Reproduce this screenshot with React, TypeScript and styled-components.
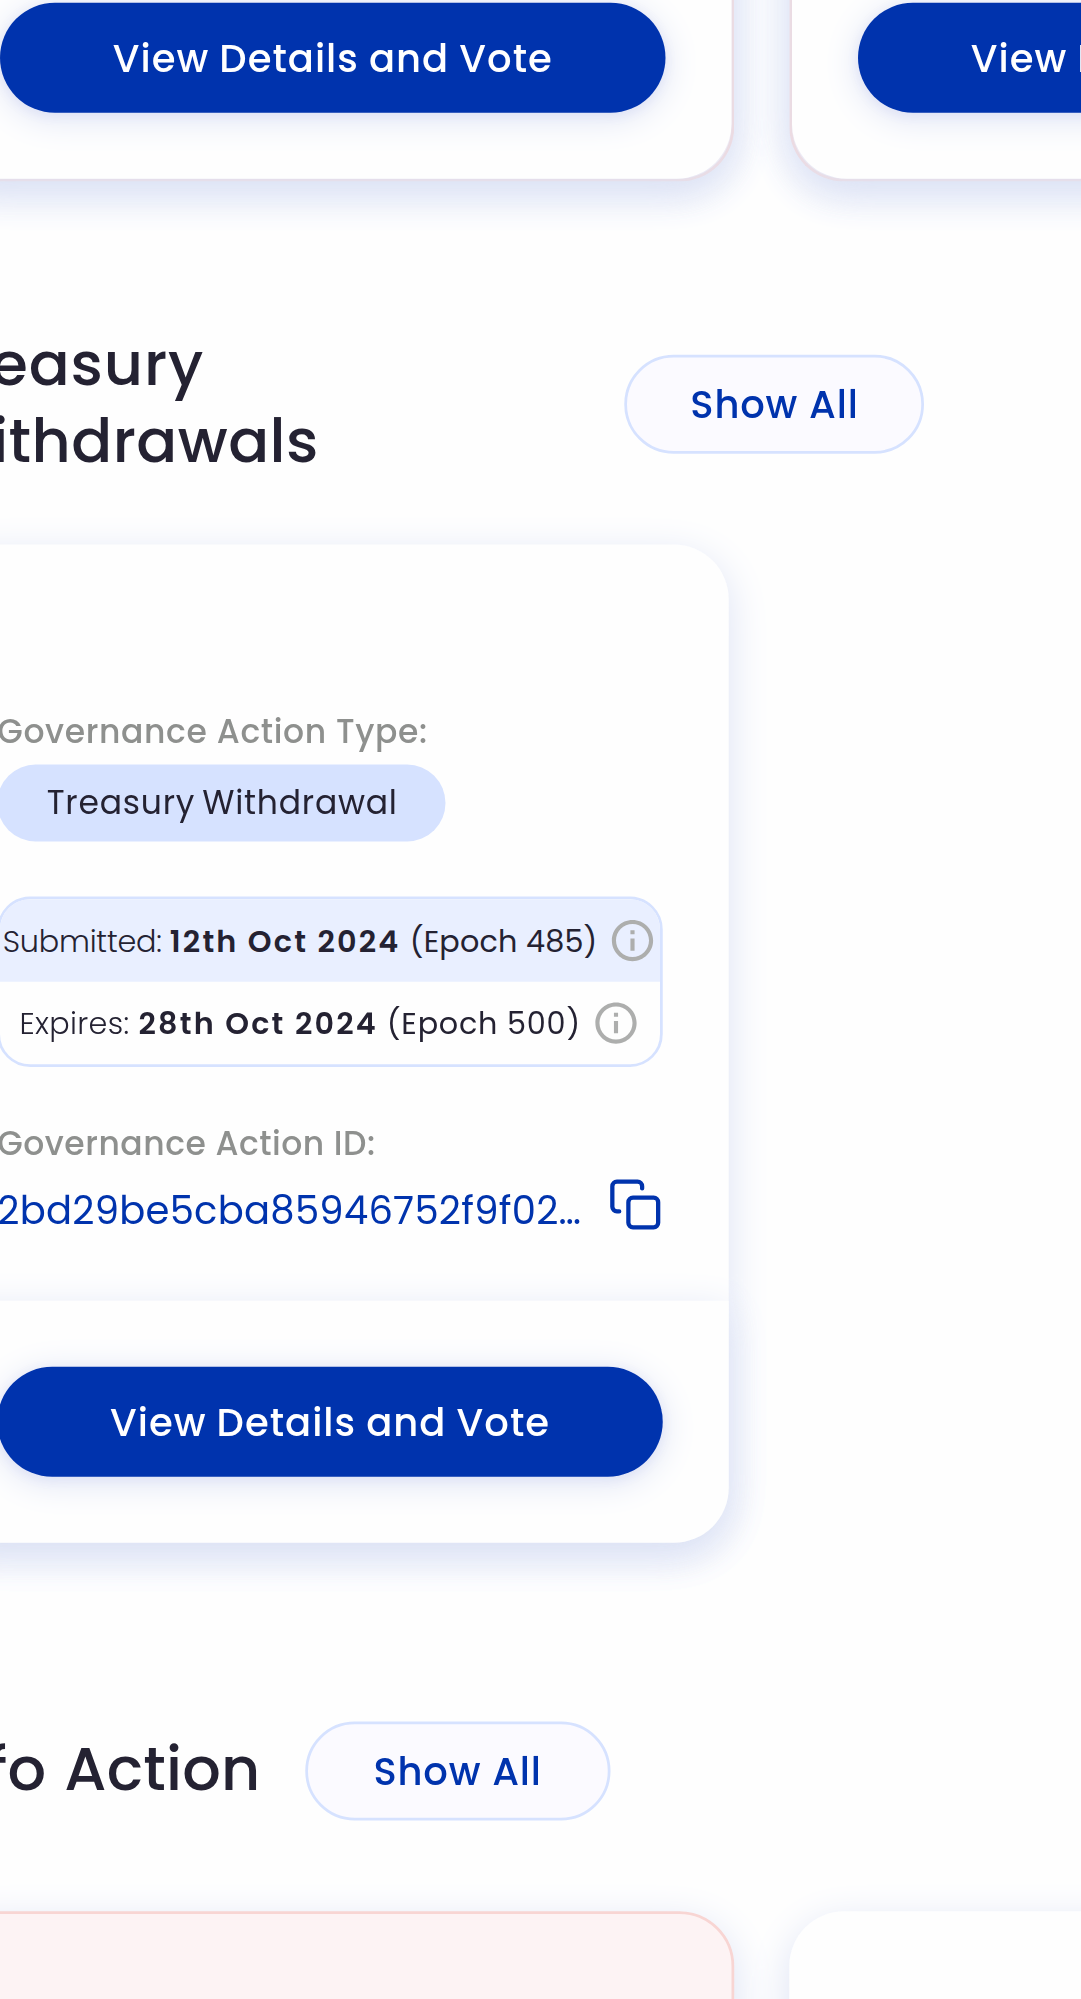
import React from "react";
import styled, { createGlobalStyle } from "styled-components";

const color = {
  blue: "#0033AD",
  ink: "#242232",
  label: "#8E908E",
  icon: "#ADAEAD",
  line: "#D6E2FF",
  tint: "#E9EFFF",
  surface: "#FEFEFE",
  shadow: "#DDE3F5",
  errorLine: "#F8D5D3",
  errorTint: "#FDF3F4",
};

const GlobalStyle = createGlobalStyle`
  * { box-sizing: border-box; }
  body {
    margin: 0;
    background: ${color.surface};
    color: ${color.ink};
    font-family: Poppins, Inter, "Open Sans", sans-serif;
  }
`;

const Viewport = styled.div`
  width: 1081px;
  height: 1999px;
  overflow: hidden;
`;

/* The page is laid out in phone pixels and magnified. */
const Zoomed = styled.div`
  display: flow-root;
  width: 393px;
  height: 726px;
  transform: scale(2.75);
  transform-origin: 0 0;
`;

const Page = styled.main`
  width: 620px;
  margin-top: -22.9px;
  margin-left: -25px;
  display: flex;
  flex-direction: column;
`;

const CardRow = styled.div`
  display: flex;
  align-items: flex-start;
  gap: 20px;
`;

const Card = styled.article<{ $wide?: boolean; $error?: boolean }>`
  width: ${(p) => (p.$wide ? 292 : 290)}px;
  flex: none;
  border-radius: 20px;
  background: ${(p) => (p.$error ? color.errorTint : color.surface)};
  border: ${(p) => (p.$error ? `1px solid ${color.errorLine}` : "none")};
  box-shadow: 0 4px 15px ${color.shadow};
`;

const TailCard = styled(Card)`
  border-top: none;
  border-top-left-radius: 0;
  border-top-right-radius: 0;
`;

const HeadCard = styled(Card)`
  height: 250px;
`;

const CardBody = styled.div`
  padding: 59px 24px 25px;
  display: flex;
  flex-direction: column;
  align-items: flex-start;
`;

const CardFooter = styled.div`
  padding: 24px;
  background: ${color.surface};
  border-radius: 0 0 20px 20px;
  box-shadow: 0 4px 15px ${color.shadow};
`;

const VoteButton = styled.button`
  display: flex;
  align-items: center;
  justify-content: center;
  width: 100%;
  height: 40px;
  padding: 0;
  border: none;
  border-radius: 20px;
  background: ${color.blue};
  color: #fff;
  font: inherit;
  font-size: 14px;
  font-weight: 500;
  letter-spacing: 0.37px;
  word-spacing: -0.33px;
  white-space: nowrap;
  box-shadow: 0 2px 13px ${color.shadow}, 0 1px 4px rgba(47, 59, 200, 0.14);
`;

const SectionHeader = styled.header<{ $top: number; $bottom: number }>`
  display: flex;
  align-items: center;
  gap: 16px;
  padding-top: ${(p) => p.$top}px;
  padding-bottom: ${(p) => p.$bottom}px;
`;

const Heading = styled.h2<{ $width?: number }>`
  display: flex;
  flex-direction: column;
  margin: 0;
  width: ${(p) => (p.$width ? `${p.$width}px` : "auto")};
  font-size: 22px;
  font-weight: 500;
  line-height: 28px;
`;

const HeadingLine = styled.span<{ $track: number; $word?: number }>`
  letter-spacing: ${(p) => p.$track}px;
  word-spacing: ${(p) => p.$word ?? 0}px;
  white-space: nowrap;
`;

const ShowAllButton = styled.button<{ $pad: number }>`
  height: 36px;
  padding: 0 ${(p) => p.$pad}px;
  border: 1px solid ${color.line};
  border-radius: 18px;
  background: #fbfaff;
  color: ${color.blue};
  font: inherit;
  font-size: 14px;
  font-weight: 500;
  letter-spacing: 0.3px;
`;

const Label = styled.p<{ $track: number }>`
  margin: 0;
  color: ${color.label};
  font-size: 12px;
  font-weight: 500;
  line-height: 18px;
  letter-spacing: ${(p) => p.$track}px;
  white-space: nowrap;
`;

const Chip = styled.span`
  display: flex;
  align-items: center;
  height: 28px;
  margin-top: 3px;
  padding: 0 17.6px 0 18px;
  border-radius: 14px;
  background: ${color.line};
  font-size: 12px;
  letter-spacing: 0.28px;
  word-spacing: -0.9px;
  white-space: nowrap;
`;

const Dates = styled.div`
  width: 100%;
  height: 62px;
  margin: 20px 0 18.5px;
  border: 1px solid ${color.line};
  border-radius: 12px;
  overflow: hidden;
`;

const DateRow = styled.div<{ $filled?: boolean }>`
  display: flex;
  align-items: center;
  justify-content: center;
  height: 30px;
  background: ${(p) => (p.$filled ? color.tint : "transparent")};
  font-size: 11px;
  white-space: nowrap;

  svg {
    flex: none;
    margin-left: 3.7px;
  }
`;

const DateText = styled.span<{ $weight: number; $track: number; $after?: number }>`
  font-weight: ${(p) => p.$weight};
  letter-spacing: ${(p) => p.$track}px;
  margin-right: ${(p) => p.$after ?? 0}px;
  white-space: pre;
`;

const IdRow = styled.div`
  display: flex;
  align-items: center;
  justify-content: space-between;
  width: 100%;
  height: 20px;
  margin-top: 3.5px;
`;

const IdText = styled.span`
  padding-top: 4px;
  color: ${color.blue};
  font-size: 14px;
  letter-spacing: 0.1px;
  white-space: nowrap;
`;

function InfoIcon() {
  return (
    <svg width="18" height="18" viewBox="0 0 24 24" fill={color.icon}>
      <path d="M11 7h2v2h-2zm0 4h2v6h-2zm1-9C6.48 2 2 6.48 2 12s4.48 10 10 10 10-4.48 10-10S17.52 2 12 2m0 18c-4.41 0-8-3.59-8-8s3.59-8 8-8 8 3.59 8 8-3.59 8-8 8" />
    </svg>
  );
}

function CopyIcon() {
  return (
    <svg
      width="20"
      height="20"
      viewBox="0 0 24 24"
      fill="none"
      stroke={color.blue}
      strokeWidth="1.87"
      strokeLinecap="round"
      strokeLinejoin="round"
    >
      <rect x="9" y="9" width="13" height="13" rx="2" />
      <path d="M5 15H4a2 2 0 0 1-2-2V4a2 2 0 0 1 2-2h9a2 2 0 0 1 2 2v1" />
    </svg>
  );
}

function VoteFooter() {
  return (
    <CardFooter>
      <VoteButton>View Details and Vote</VoteButton>
    </CardFooter>
  );
}

interface DateLineProps {
  name: string;
  date: string;
  epoch: number;
  /** Letter spacing of the name, the date and the epoch. */
  tracks: [number, number, number];
  nameGap?: number;
  dateGap?: number;
  filled?: boolean;
}

function DateLine({ name, date, epoch, tracks, nameGap, dateGap, filled }: DateLineProps) {
  return (
    <DateRow $filled={filled}>
      <DateText $weight={300} $track={tracks[0]} $after={nameGap}>{`${name}: `}</DateText>
      <DateText $weight={600} $track={tracks[1]} $after={dateGap}>{date}</DateText>
      <DateText $weight={400} $track={tracks[2]}>{` (Epoch ${epoch})`}</DateText>
      <InfoIcon />
    </DateRow>
  );
}

export default function App() {
  return (
    <Viewport>
      <GlobalStyle />
      <Zoomed>
        <Page>
          <CardRow>
            <TailCard $wide $error>
              <VoteFooter />
            </TailCard>
            <TailCard $wide $error>
              <VoteFooter />
            </TailCard>
          </CardRow>

          <SectionHeader $top={53} $bottom={23}>
            <Heading $width={235.9}>
              <HeadingLine $track={0.33}>Treasury</HeadingLine>
              <HeadingLine $track={0.16}>Withdrawals</HeadingLine>
            </Heading>
            <ShowAllButton $pad={23.15}>Show All</ShowAllButton>
          </SectionHeader>

          <CardRow>
            <Card>
              <CardBody>
                <Label $track={0.23}>Governance Action Type:</Label>
                <Chip>Treasury Withdrawal</Chip>
                <Dates>
                  <DateLine
                    name="Submitted"
                    date="12th Oct 2024"
                    epoch={485}
                    tracks={[-0.08, 0.79, 0.07]}
                    dateGap={0.4}
                    filled
                  />
                  <DateLine
                    name="Expires"
                    date="28th Oct 2024"
                    epoch={500}
                    tracks={[0.12, 0.8, 0.28]}
                    nameGap={0.2}
                  />
                </Dates>
                <Label $track={0.185}>Governance Action ID:</Label>
                <IdRow>
                  <IdText>2bd29be5cba85946752f9f02…</IdText>
                  <CopyIcon />
                </IdRow>
              </CardBody>
              <VoteFooter />
            </Card>
          </CardRow>

          <SectionHeader $top={65} $bottom={33}>
            <Heading>
              <HeadingLine $track={0.1} $word={0.7}>Info Action</HeadingLine>
            </Heading>
            <ShowAllButton $pad={24}>Show All</ShowAllButton>
          </SectionHeader>

          <CardRow>
            <HeadCard $wide $error />
            <HeadCard $wide />
          </CardRow>
        </Page>
      </Zoomed>
    </Viewport>
  );
}
